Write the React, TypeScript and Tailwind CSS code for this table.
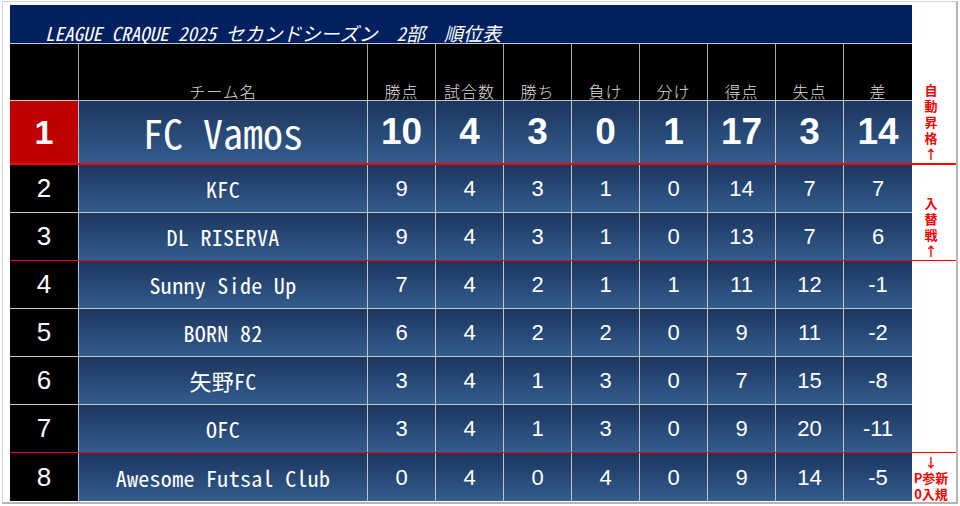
import React from "react";

const mono = "font-['Noto_Sans_Mono_CJK_JP','Noto_Sans_CJK_JP','DejaVu_Sans_Mono',monospace]";
const jp = "font-['Noto_Sans_CJK_JP',sans-serif]";
const num = "font-['Liberation_Sans',Arial,sans-serif]";

const rows = [
  { rank: 1, team: "FC Vamos", stats: [10, 4, 3, 0, 1, 17, 3, 14] },
  { rank: 2, team: "KFC", stats: [9, 4, 3, 1, 0, 14, 7, 7] },
  { rank: 3, team: "DL RISERVA", stats: [9, 4, 3, 1, 0, 13, 7, 6] },
  { rank: 4, team: "Sunny Side Up", stats: [7, 4, 2, 1, 1, 11, 12, -1] },
  { rank: 5, team: "BORN 82", stats: [6, 4, 2, 2, 0, 9, 11, -2] },
  { rank: 6, team: "矢野FC", stats: [3, 4, 1, 3, 0, 7, 15, -8] },
  { rank: 7, team: "OFC", stats: [3, 4, 1, 3, 0, 9, 20, -11] },
  { rank: 8, team: "Awesome Futsal Club", stats: [0, 4, 0, 4, 0, 9, 14, -5] },
];

const headers = ["勝点", "試合数", "勝ち", "負け", "分け", "得点", "失点", "差"];

const notes: Record<number, string[]> = {
  1: ["自", "動", "昇", "格", "↑"],
  3: ["入", "替", "戦", "↑"],
  8: ["↓", "P参新", "0入規"],
};

function Note({ rank, h }: { rank: number; h: string }) {
  const lines = notes[rank];
  return (
    <div
      className={`flex ${h} w-[38px] flex-col items-center ${rank === 8 ? "justify-start pt-[1px]" : "justify-end pb-[1px]"} ${jp} text-[13px] font-bold leading-[16px] text-[#ff0000]`}
    >
      {lines && lines.map((l, i) => <div key={i}>{l}</div>)}
    </div>
  );
}

function Row({ r }: { r: (typeof rows)[number] }) {
  const first = r.rank === 1;
  const redLine = r.rank === 3 || r.rank === 7;
  const last = r.rank === 8;
  const outer = first
    ? "border-b-2 border-[#ff0000]"
    : redLine
      ? "border-b border-[#ff0000]"
      : "";
  const inner = !first && !redLine && !last ? "border-b border-[#c4c4c4]" : "";
  const h = first ? "h-[62px]" : last ? "h-[48px]" : "h-[47px]";
  const cell = "bg-gradient-to-b from-[#1c365e] to-[#335d8f]";
  return (
    <div className={`flex items-start ${outer}`}>
      <div className={`flex w-[902px] ${inner}`}>
        <div
          className={`flex ${h} w-[69px] items-center justify-center border-r border-[#b8c2d0] ${first ? "bg-[#c00000]" : "bg-black"} ${num} text-white ${first ? "text-[34px] font-bold" : "text-[26px]"}`}
        >
          {r.rank}
        </div>
        <div
          className={`flex ${h} w-[289px] items-center justify-center border-r border-[#c4c4c4] ${cell} ${mono} text-white ${first ? "text-[40px]" : "text-[22px] tracking-[0.3px]"}`}
        >
          {r.team}
        </div>
        {r.stats.map((s, i) => (
          <div
            key={i}
            className={`flex ${h} w-[68px] items-center justify-center ${i < 7 ? "border-r border-[#c4c4c4]" : ""} ${cell} ${num} text-white ${first ? "text-[37px] font-bold" : "text-[22px]"}`}
          >
            {s}
          </div>
        ))}
      </div>
      <Note rank={r.rank} h={h} />
    </div>
  );
}

export default function App() {
  return (
    <div className="h-[506px] w-[960px] overflow-hidden bg-white">
      <div className="ml-[2px] mt-[1px] h-[503px] w-[956px] border border-[#d4d4d4] border-r-2 border-b-2 border-r-[#b4b4b4] border-b-[#b4b4b4] pl-[7px] pt-[3px]">
        <div
          className={`flex h-[39px] w-[902px] items-end border-b border-[#c4c4c4] bg-[#002060] pb-[1px] pl-[35px] ${mono} text-[19px] italic leading-none text-white`}
        >
          LEAGUE CRAQUE 2025 セカンドシーズン　2部　順位表
        </div>
        <div className="flex">
          <div className="flex h-[57px] w-[902px] border-b border-[#c4c4c4] bg-black">
            <div className="w-[69px] border-r border-[#a8a8a8]" />
            <div
              className={`flex w-[289px] items-end justify-center border-r border-[#a8a8a8] pb-[1px] ${jp} text-[16px] font-extralight leading-none tracking-[1px] text-[#dcdcdc]`}
            >
              チーム名
            </div>
            {headers.map((h, i) => (
              <div
                key={h}
                className={`flex w-[68px] items-end justify-center ${i < 7 ? "border-r border-[#a8a8a8]" : ""} pb-[1px] ${jp} text-[16px] font-extralight leading-none tracking-[1px] text-[#dcdcdc]`}
              >
                {h}
              </div>
            ))}
          </div>
          <div className="w-[38px]" />
        </div>
        {rows.map((r) => (
          <Row key={r.rank} r={r} />
        ))}
      </div>
    </div>
  );
}
